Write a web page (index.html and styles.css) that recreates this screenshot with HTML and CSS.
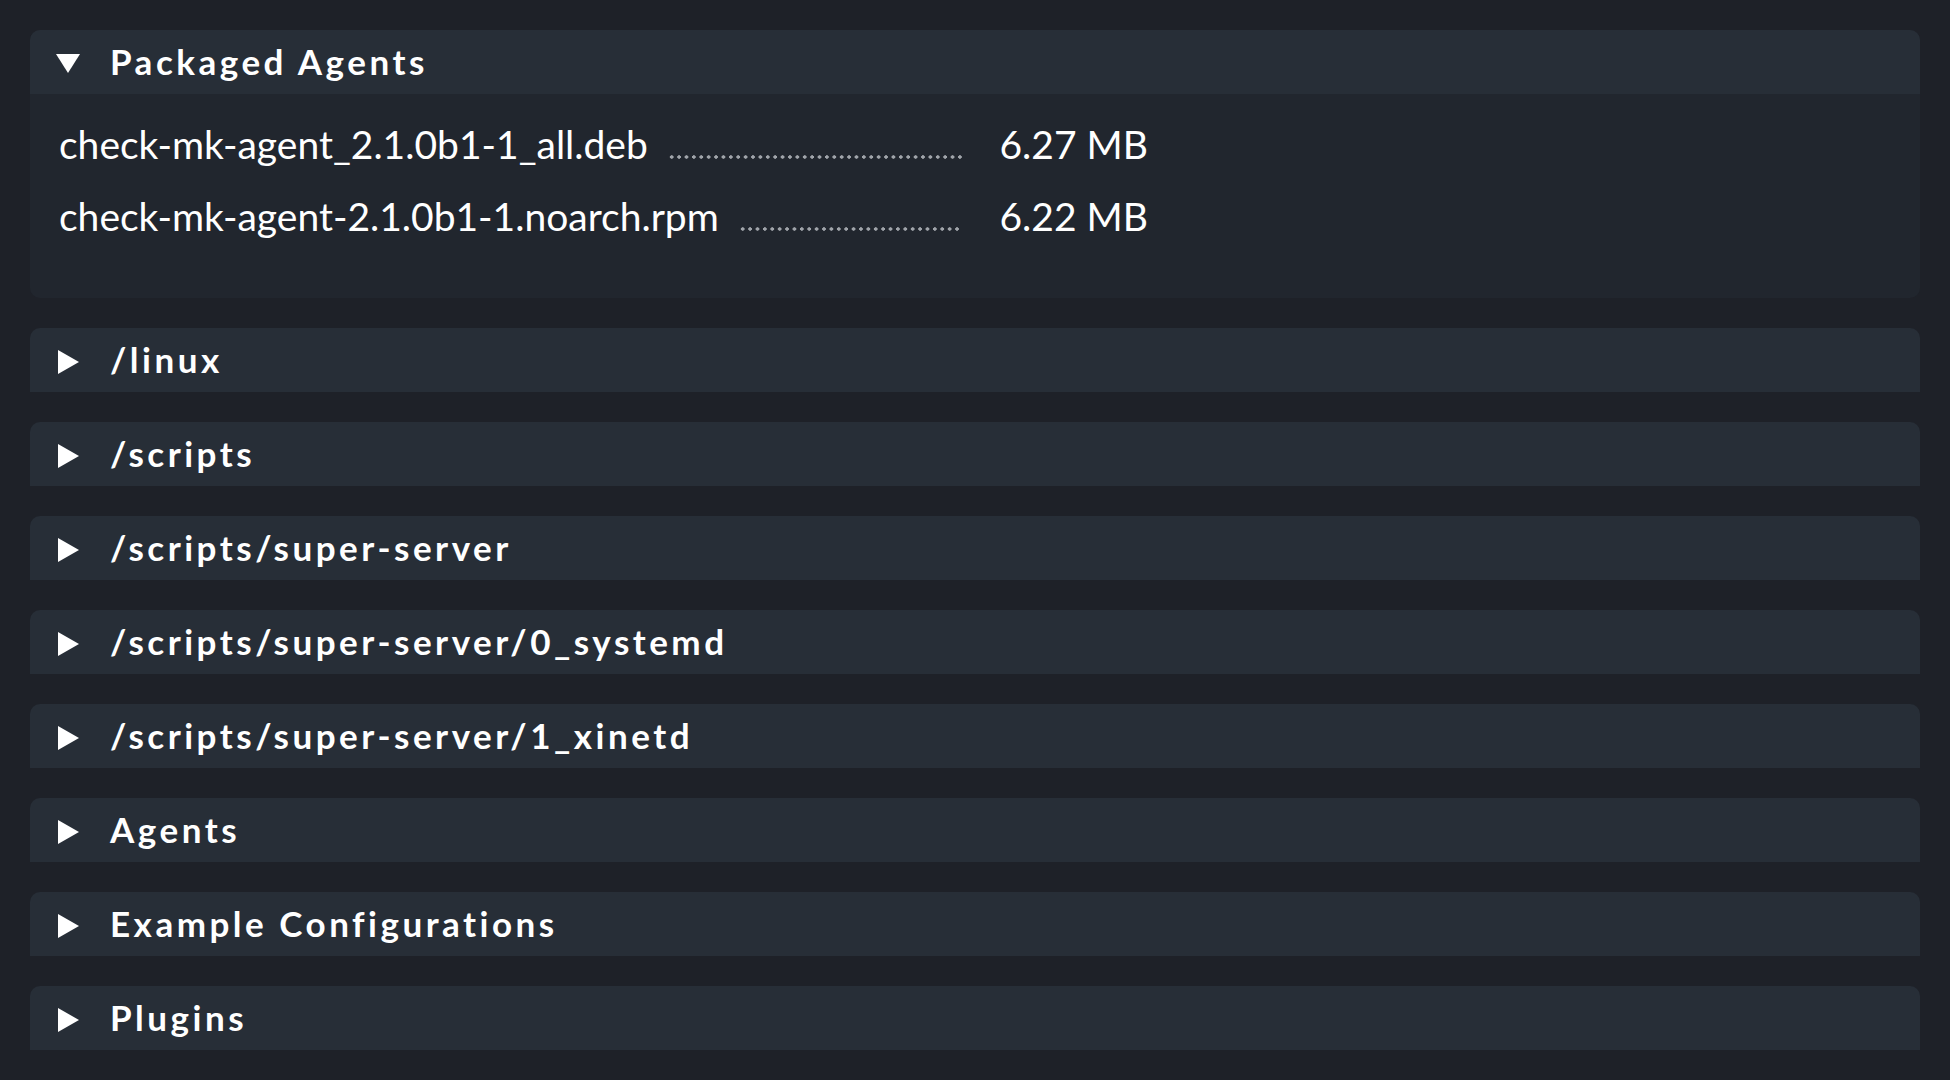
FILE: index.html
```html
<!DOCTYPE html>
<html lang="en">
<head>
<meta charset="utf-8">
<title>Agents</title>
<link rel="stylesheet" href="styles.css">
</head>
<body>
<main class="page">
  <section class="panel open">
    <header class="panel-head">
      <span class="tri tri-down"></span>
      <span class="title">Packaged Agents</span>
    </header>
    <div class="panel-body">
      <div class="file-row">
        <div class="file-name-cell">
          <span class="file-name">check-mk-agent_2.1.0b1-1_all.deb</span>
          <span class="leader"></span>
        </div>
        <span class="file-size">6.27 MB</span>
      </div>
      <div class="file-row">
        <div class="file-name-cell">
          <span class="file-name">check-mk-agent-2.1.0b1-1.noarch.rpm</span>
          <span class="leader"></span>
        </div>
        <span class="file-size">6.22 MB</span>
      </div>
    </div>
  </section>

  <section class="panel"><header class="panel-head"><span class="tri tri-right"></span><span class="title">/linux</span></header></section>
  <section class="panel"><header class="panel-head"><span class="tri tri-right"></span><span class="title">/scripts</span></header></section>
  <section class="panel"><header class="panel-head"><span class="tri tri-right"></span><span class="title">/scripts/super-server</span></header></section>
  <section class="panel"><header class="panel-head"><span class="tri tri-right"></span><span class="title">/scripts/super-server/0_systemd</span></header></section>
  <section class="panel"><header class="panel-head"><span class="tri tri-right"></span><span class="title">/scripts/super-server/1_xinetd</span></header></section>
  <section class="panel"><header class="panel-head"><span class="tri tri-right"></span><span class="title">Agents</span></header></section>
  <section class="panel"><header class="panel-head"><span class="tri tri-right"></span><span class="title">Example Configurations</span></header></section>
  <section class="panel"><header class="panel-head"><span class="tri tri-right"></span><span class="title">Plugins</span></header></section>
</main>
</body>
</html>
```

FILE: styles.css
```css
html, body {
  margin: 0;
  padding: 0;
  background: #1e2128;
}

body {
  font-family: Lato, "Noto Sans", sans-serif;
  color: #ffffff;
  width: 1950px;
  height: 1080px;
  overflow: hidden;
}

.page {
  padding: 30px;
  display: flex;
  flex-direction: column;
  gap: 30px;
}

.panel {
  border-radius: 10px 10px 0 0;
  overflow: hidden;
}

.panel.open {
  border-radius: 10px;
  background: #21262e;
}

.panel-head {
  height: 64px;
  background: #272e37;
  display: flex;
  align-items: center;
  padding-left: 27px;
}

.tri {
  width: 0;
  height: 0;
  flex: none;
}

.tri-down {
  border-left: 12px solid transparent;
  border-right: 12px solid transparent;
  border-top: 19px solid #ffffff;
  margin-left: -1px;
  margin-right: 30px;
  margin-top: 2px;
}

.tri-right {
  border-top: 12px solid transparent;
  border-bottom: 12px solid transparent;
  border-left: 21px solid #ffffff;
  margin-right: 31px;
  margin-left: 1px;
  margin-top: 4px;
}

.title {
  font-weight: 700;
  font-size: 35px;
  letter-spacing: 0.1em;
  line-height: 62px;
  margin-bottom: 2px;
}

.panel-body {
  padding: 13.5px 0 46.5px 29px;
}

.file-row {
  display: flex;
  align-items: baseline;
  line-height: 72px;
  font-size: 39px;
}

.file-name-cell {
  width: 903px;
  flex: none;
  display: flex;
  align-items: baseline;
}

.leader {
  flex: 1;
  height: 4px;
  margin-left: 20px;
  background-image: radial-gradient(circle, #a0a4aa 1.5px, transparent 1.9px);
  background-size: 7.4px 4px;
  background-repeat: repeat-x;
  background-position: left center;
}

.file-size {
  margin-left: 37.5px;
}
```
